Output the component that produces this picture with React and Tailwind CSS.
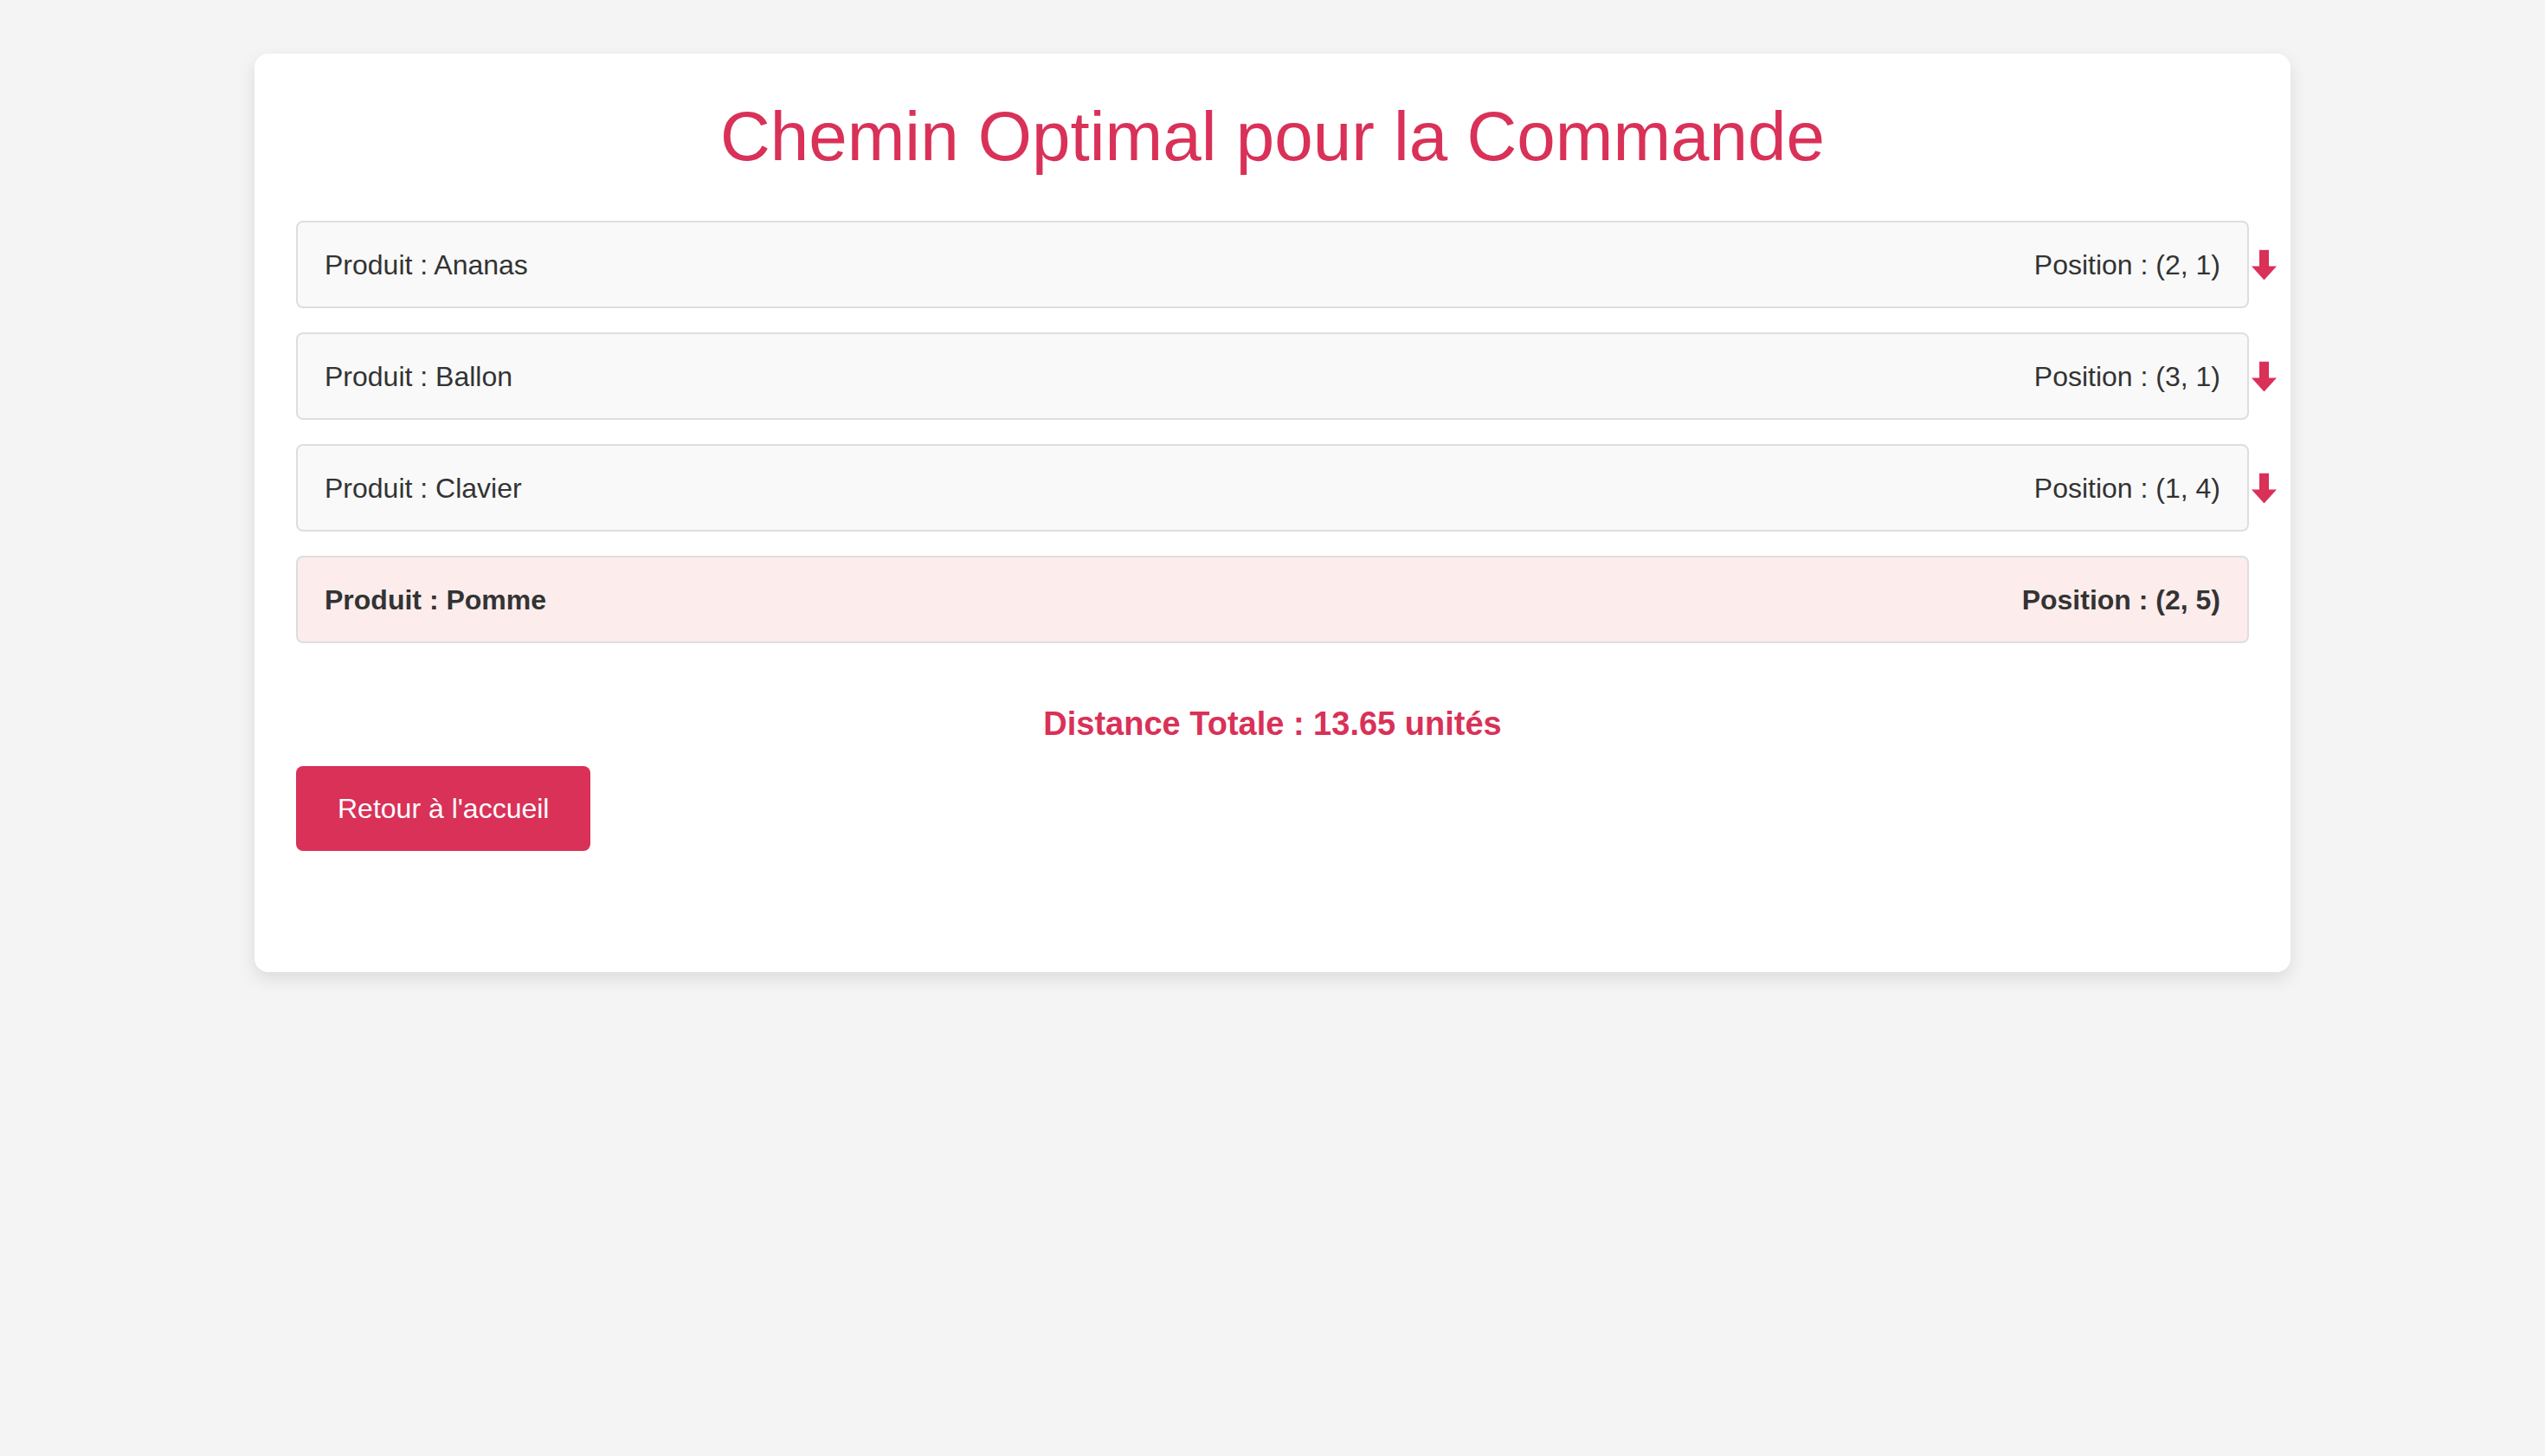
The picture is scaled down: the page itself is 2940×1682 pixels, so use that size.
import React from "react";

const items = [
  { name: "Ananas", pos: "(2, 1)" },
  { name: "Ballon", pos: "(3, 1)" },
  { name: "Clavier", pos: "(1, 4)" },
  { name: "Pomme", pos: "(2, 5)", last: true },
];

function Arrow() {
  return (
    <svg
      width="29"
      height="35"
      viewBox="0 0 29 35"
      className="absolute left-full top-1/2 -translate-y-1/2 ml-[5px]"
    >
      <rect x="9" y="0" width="11" height="20" fill="#d93158" />
      <polygon points="0,19 29,19 14.5,35" fill="#d93158" />
    </svg>
  );
}

export default function App() {
  return (
    <div
      className="min-h-[1682px] w-full bg-[#f4f4f4] pt-[62px]"
      style={{ fontFamily: '"Liberation Sans", Arial, sans-serif' }}
    >
      <div className="mx-auto w-[2352px] h-[1061px] rounded-[16px] bg-white px-[48px] pt-[48px] shadow-[0_8px_20px_rgba(0,0,0,0.1)]">
        <h1 className="mt-[3px] mb-[52px] text-center text-[80px] leading-[90px] text-[#d93158]">
          Chemin Optimal pour la Commande
        </h1>
        <div className="flex flex-col gap-[28px]">
          {items.map((it) => (
            <div
              key={it.name}
              className={
                "relative flex h-[101px] items-center justify-between rounded-[8px] border-2 border-[#dedede] px-[31px] text-[32px] text-[#333333] " +
                (it.last ? "bg-[#fcecec] font-bold" : "bg-[#f9f9f9]")
              }
            >
              <span>Produit : {it.name}</span>
              <span>Position : {it.pos}</span>
              {!it.last && <Arrow />}
            </div>
          ))}
        </div>
        <p className="mt-[72px] text-center text-[38px] font-bold leading-[43px] text-[#d93158]">
          Distance Totale : 13.65 unités
        </p>
        <button className="mt-[27px] flex h-[98px] items-center rounded-[8px] bg-[#d93158] px-[48px] text-[32px] text-white">
          Retour à l'accueil
        </button>
      </div>
    </div>
  );
}
